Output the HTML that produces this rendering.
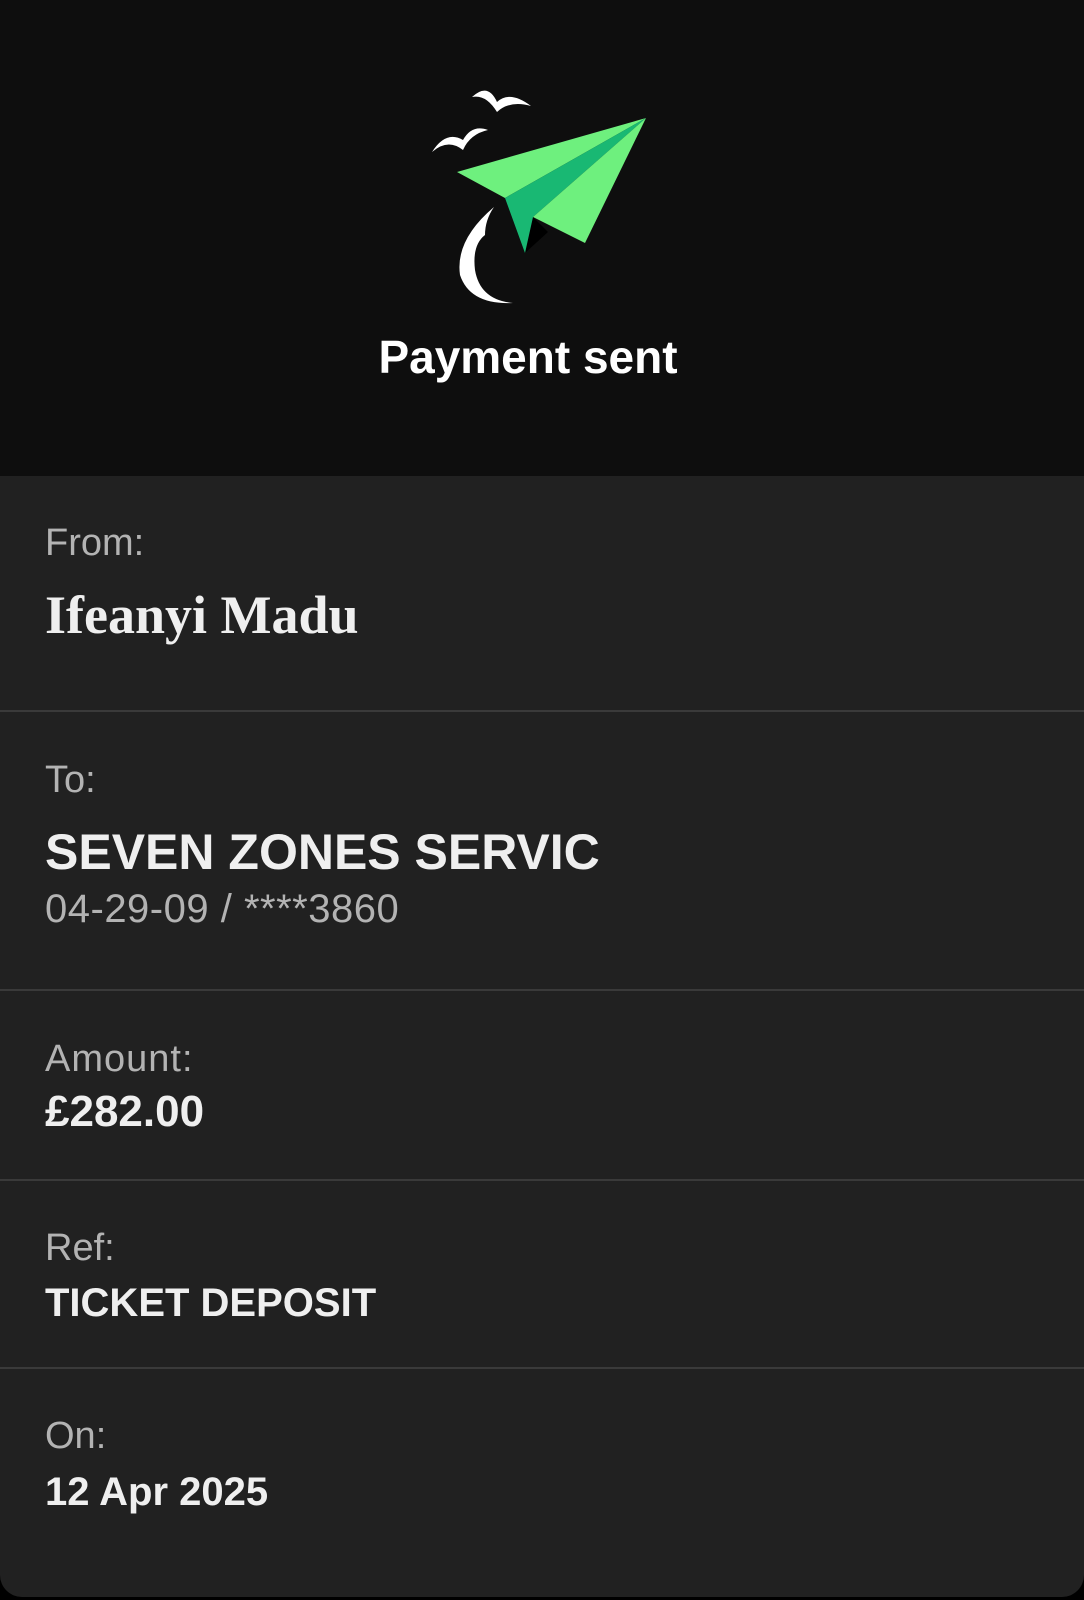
<!DOCTYPE html>
<html><head><meta charset="utf-8"><style>
html,body{margin:0;padding:0;background:#000;}
#p{position:relative;width:1084px;height:1600px;overflow:hidden;background:#000;font-family:"Liberation Sans",sans-serif;}
#hd{position:absolute;left:0;top:0;width:1084px;height:476px;background:#0e0e0e;}
#bd{position:absolute;left:0;top:476px;width:1084px;height:1121px;background:#212121;border-radius:0 0 22px 22px;}
.t{position:absolute;left:45px;line-height:1;white-space:nowrap;}
.l{font-size:38px;color:#b3b3b3;}
.v{color:#efefef;font-weight:bold;}
.s{position:absolute;left:0;width:1084px;height:2px;background:#3a3a3a;}
</style></head><body><div id="p">
<div id="hd"></div>
<svg style="position:absolute;left:0;top:0" width="1084" height="476">
<path d="M472 97 Q488 82 497 102 Q510 90 531 106 Q510 100 497 112 Q486 94 472 97Z" fill="#fff"/>
<path d="M432 152 Q446 130 463 140 Q472 124 488 130 Q470 134 463 150 Q448 138 432 152Z" fill="#fff"/>
<path d="M494 207 Q455 240 460 275 Q470 305 513 303 Q480 300 475 270 Q472 245 485 235 Q485 220 494 207Z" fill="#fff"/>
<path d="M533 217 L525 253 L548 232Z" fill="#000"/>
<path d="M646 118 L457 172 L505 198Z" fill="#6ef07e"/>
<path d="M646 118 L505 198 L525 253 L533 217Z" fill="#19b873"/>
<path d="M646 118 L533 217 L585 243Z" fill="#6ef07e"/>
</svg>
<div class="t v" style="left:-14px;width:1084px;text-align:center;top:334px;font-size:46px;color:#fff;">Payment sent</div>
<div id="bd"></div>
<div class="t l" style="top:524px">From:</div>
<div class="t v" style="top:588px;font-size:54px;font-family:'Liberation Serif',serif;">Ifeanyi Madu</div>
<div class="s" style="top:710px"></div>
<div class="t l" style="top:761px">To:</div>
<div class="t v" style="top:827px;font-size:50px;">SEVEN ZONES SERVIC</div>
<div class="t l" style="top:889px;font-size:40px;letter-spacing:0.5px;">04-29-09 / ****3860</div>
<div class="s" style="top:989px"></div>
<div class="t l" style="top:1040px;letter-spacing:1px;">Amount:</div>
<div class="t v" style="top:1090px;font-size:44px;">£282.00</div>
<div class="s" style="top:1179px"></div>
<div class="t l" style="top:1229px">Ref:</div>
<div class="t v" style="top:1283px;font-size:40px;">TICKET DEPOSIT</div>
<div class="s" style="top:1367px"></div>
<div class="t l" style="top:1417px">On:</div>
<div class="t v" style="top:1472px;font-size:40px;">12 Apr 2025</div>
</div></body></html>
